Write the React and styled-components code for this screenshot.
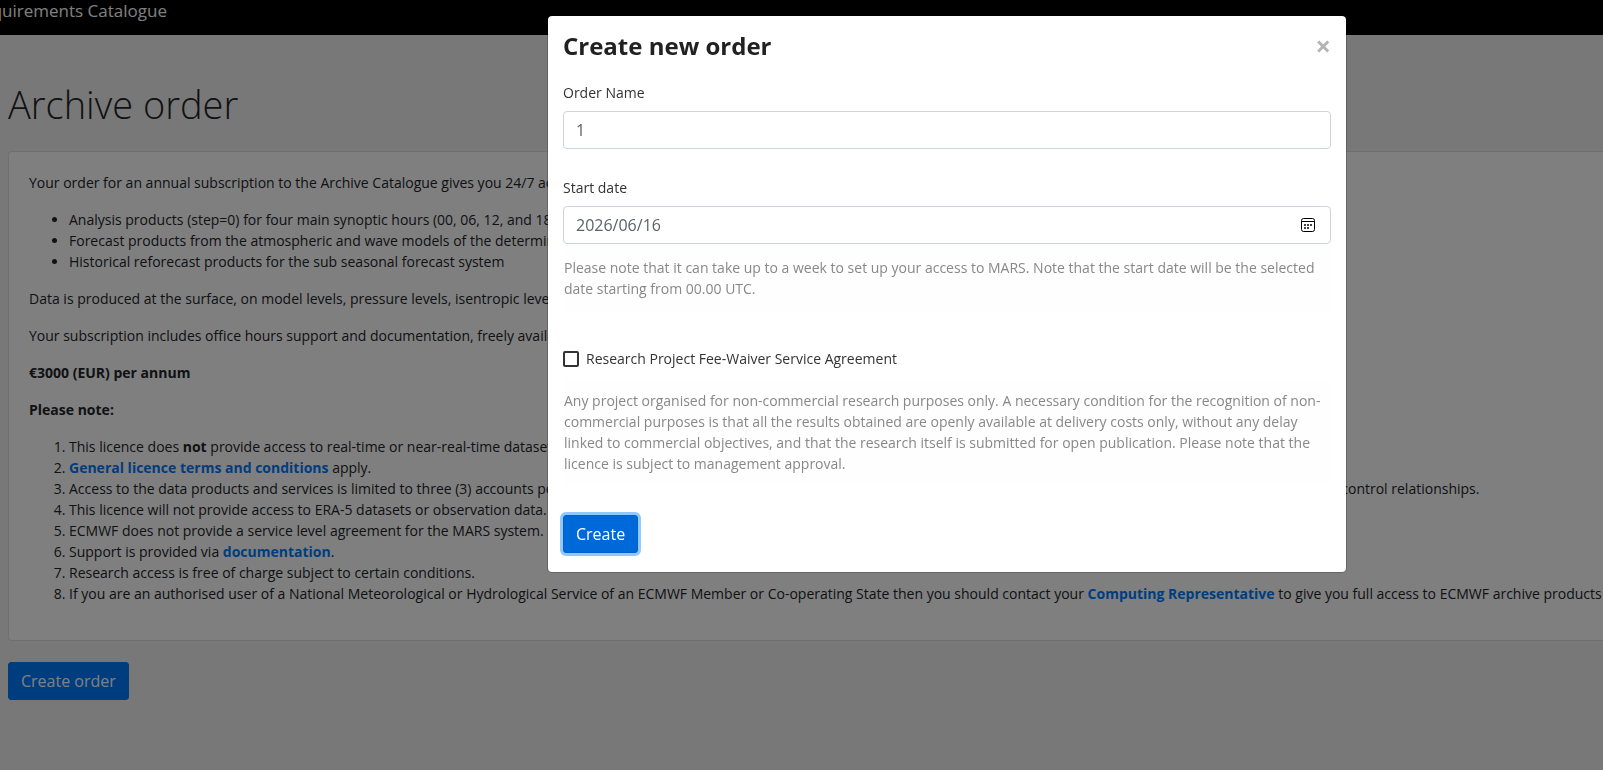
import React, { useState } from "react";
import styled, { createGlobalStyle, css } from "styled-components";

const GlobalStyle = createGlobalStyle`
  *, *::before, *::after { box-sizing: border-box; }
  html, body { margin: 0; height: 100%; }
  body {
    background: #f1f1f1;
    color: #212529;
    font-family: "Open Sans", sans-serif;
    font-size: 14px;
    line-height: 21px;
    overflow: hidden;
  }
`;

const TopBar = styled.header`
  display: flex;
  height: 35px;
  background: #000;
  color: #fff;
`;

const Brand = styled.span`
  display: flex;
  justify-content: flex-end;
  width: 167px;
  overflow: hidden;
  white-space: nowrap;
  font-size: 17px;
  line-height: 22px;
`;

const Main = styled.main`
  padding: 45px 0 0 8px;
`;

const PageTitle = styled.h1`
  margin: 0 0 23px;
  font-size: 38px;
  font-weight: 300;
  line-height: 48px;
`;

const Card = styled.section`
  margin-bottom: 21px;
  padding: 20px;
  border: 1px solid #dfdfdf;
  border-right: 0;
  border-radius: 4px 0 0 4px;
  background: #fff;
  white-space: nowrap;
  overflow: hidden;
`;

const Paragraph = styled.p`
  margin: 0 0 16px;
`;

const listStyle = css`
  margin: 0 0 16px;
  padding-left: 40px;
`;

const BulletList = styled.ul`
  ${listStyle}
`;

const NumberList = styled.ol`
  ${listStyle}
`;

const TextLink = styled.a`
  color: #007bff;
  font-weight: 700;
  text-decoration: none;
`;

const Button = styled.button`
  display: block;
  padding: 6px 12px;
  border: 1px solid ${(p) => (p.$active ? "#0062cc" : "#007bff")};
  border-radius: 3px;
  background: ${(p) => (p.$active ? "#0069d9" : "#007bff")};
  box-shadow: ${(p) => (p.$active ? "0 0 0 3px #93c7ff" : "none")};
  color: #fff;
  font: 400 16px/24px "Open Sans", sans-serif;
  outline: none;
  cursor: pointer;
`;

const Backdrop = styled.div`
  position: fixed;
  inset: 0;
  display: flex;
  align-items: flex-start;
  justify-content: center;
  padding: 15px 0 0 291px;
  background: rgba(0, 0, 0, 0.5);
`;

const Dialog = styled.div`
  width: 100%;
  max-width: 800px;
  padding: 15px 15px 19px;
  border: 1px solid rgba(0, 0, 0, 0.2);
  border-radius: 5px;
  background: #fff;
  background-clip: padding-box;
`;

const DialogHeader = styled.div`
  display: flex;
  align-items: center;
  justify-content: space-between;
  margin-bottom: 22px;
`;

const DialogTitle = styled.h2`
  margin: 0;
  color: #212121;
  font-size: 24px;
  font-weight: 700;
  line-height: 29px;
`;

const CloseButton = styled.button`
  padding: 0;
  border: 0;
  background: none;
  color: #b4b4b4;
  font: 700 27px/29px "Open Sans", sans-serif;
  cursor: pointer;
`;

const Form = styled.form`
  display: flex;
  flex-direction: column;
  color: #333;
`;

const Field = styled.div`
  margin-bottom: ${(p) => p.$gap}px;
`;

const Label = styled.label`
  display: block;
  margin-bottom: 8px;
`;

const Control = styled.div`
  display: flex;
  align-items: center;
  height: 38px;
  padding: 0 15px 0 12px;
  border: 1px solid #ced4da;
  border-radius: 4px;
  background: #fff;
`;

const Input = styled.input`
  flex: 1;
  min-width: 0;
  padding: 0;
  border: 0;
  outline: none;
  background: none;
  color: #5c6268;
  font: 400 16px/24px "Open Sans", sans-serif;
`;

const IconButton = styled.button`
  display: flex;
  padding: 0;
  border: 0;
  background: none;
  cursor: pointer;
`;

const Help = styled.p`
  margin: 0;
  padding: 12px 0;
  border: 1px solid #fff;
  background: #fefefe;
  color: #888;
`;

const CheckLabel = styled.label`
  display: flex;
  align-items: center;
  gap: 7px;
  margin-bottom: 8px;
`;

const Checkbox = styled.input.attrs({ type: "checkbox" })`
  appearance: none;
  width: 16px;
  height: 16px;
  margin: 0;
  border: 2px solid #333;
  border-radius: 2px;
  background: #fff;

  &:checked {
    background: #333;
  }
`;

const Actions = styled.div`
  display: flex;
`;

function CalendarIcon() {
  return (
    <svg width="14" height="14" viewBox="0 0 14 14" aria-hidden="true">
      <rect x="0.5" y="0.5" width="13" height="13" rx="2" fill="none" stroke="#000" />
      <path d="M1 3.5h12" stroke="#000" />
      <path
        fill="#444"
        d="M3 6h2v2H3zM6 6h2v2H6zM9 6h2v2H9zM3 9h2v2H3zM6 9h2v2H6z"
      />
    </svg>
  );
}

function OrderDetails() {
  return (
    <Card>
      <Paragraph>
        Your order for an annual subscription to the Archive Catalogue gives you 24/7 access to:
      </Paragraph>
      <BulletList>
        <li>Analysis products (step=0) for four main synoptic hours (00, 06, 12, and 18 UTC)</li>
        <li>Forecast products from the atmospheric and wave models of the deterministic and ensemble systems</li>
        <li>Historical reforecast products for the sub seasonal forecast system</li>
      </BulletList>
      <Paragraph>
        Data is produced at the surface, on model levels, pressure levels, isentropic levels and PV levels.
      </Paragraph>
      <Paragraph>
        Your subscription includes office hours support and documentation, freely available software.
      </Paragraph>
      <Paragraph>
        <strong>€3000 (EUR) per annum</strong>
      </Paragraph>
      <Paragraph>
        <strong>Please note:</strong>
      </Paragraph>
      <NumberList>
        <li>
          This licence does <strong>not</strong> provide access to real-time or near-real-time datasets.
        </li>
        <li>
          <TextLink href="#terms">General licence terms and conditions</TextLink> apply.
        </li>
        <li>
          Access to the data products and services is limited to three (3) accounts per organisation, including any
          subsidiary, group, affiliated company or legal entity that is associated through ownership or control
          relationships.
        </li>
        <li>This licence will not provide access to ERA-5 datasets or observation data.</li>
        <li>ECMWF does not provide a service level agreement for the MARS system.</li>
        <li>
          Support is provided via <TextLink href="#documentation">documentation</TextLink>.
        </li>
        <li>Research access is free of charge subject to certain conditions.</li>
        <li>
          If you are an authorised user of a National Meteorological or Hydrological Service of an ECMWF Member or
          Co-operating State then you should contact your{" "}
          <TextLink href="#representative">Computing Representative</TextLink> to give you full access to ECMWF
          archive products
        </li>
      </NumberList>
    </Card>
  );
}

function OrderDialog({ onClose }) {
  const [name, setName] = useState("1");
  const [date, setDate] = useState("2026/06/16");

  return (
    <Backdrop>
      <Dialog role="dialog" aria-modal="true" aria-labelledby="dialog-title">
        <DialogHeader>
          <DialogTitle id="dialog-title">Create new order</DialogTitle>
          <CloseButton type="button" aria-label="Close" onClick={onClose}>
            ×
          </CloseButton>
        </DialogHeader>
        <Form onSubmit={(e) => e.preventDefault()}>
          <Field $gap={28}>
            <Label htmlFor="order-name">Order Name</Label>
            <Control>
              <Input id="order-name" value={name} onChange={(e) => setName(e.target.value)} />
            </Control>
          </Field>
          <Field $gap={36}>
            <Label htmlFor="start-date">Start date</Label>
            <Control>
              <Input id="start-date" value={date} onChange={(e) => setDate(e.target.value)} />
              <IconButton type="button" aria-label="Choose date">
                <CalendarIcon />
              </IconButton>
            </Control>
            <Help>
              Please note that it can take up to a week to set up your access to MARS. Note that the start date will
              be the selected date starting from 00.00 UTC.
            </Help>
          </Field>
          <Field $gap={28}>
            <CheckLabel>
              <Checkbox />
              Research Project Fee-Waiver Service Agreement
            </CheckLabel>
            <Help>
              Any project organised for non-commercial research purposes only. A necessary condition for the
              recognition of non-commercial purposes is that all the results obtained are openly available at
              delivery costs only, without any delay linked to commercial objectives, and that the research itself is
              submitted for open publication. Please note that the licence is subject to management approval.
            </Help>
          </Field>
          <Actions>
            <Button type="submit" $active>
              Create
            </Button>
          </Actions>
        </Form>
      </Dialog>
    </Backdrop>
  );
}

export default function App() {
  const [open, setOpen] = useState(true);

  return (
    <>
      <GlobalStyle />
      <TopBar>
        <Brand>quirements Catalogue</Brand>
      </TopBar>
      <Main>
        <PageTitle>Archive order</PageTitle>
        <OrderDetails />
        <Button type="button" onClick={() => setOpen(true)}>
          Create order
        </Button>
      </Main>
      {open && <OrderDialog onClose={() => setOpen(false)} />}
    </>
  );
}
